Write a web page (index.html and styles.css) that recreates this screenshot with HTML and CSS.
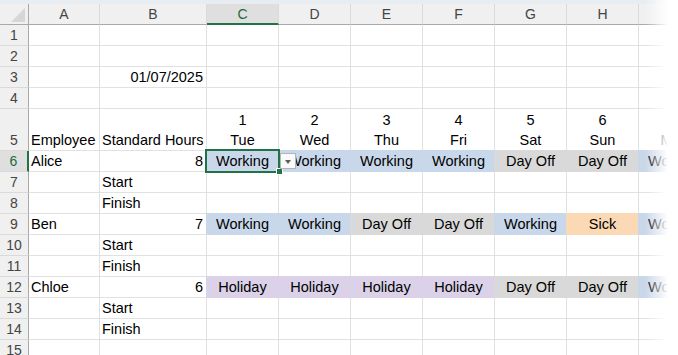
FILE: index.html
```html
<!DOCTYPE html>
<html lang="en">
<head>
  <meta charset="UTF-8">
  <title>Rota - Sheet1</title>
  <link rel="stylesheet" href="styles.css">
</head>
<body>
  <div class="topbar"></div>

  <div class="sheet">
    <div class="row head">
      <div class="hc corner">
        <svg width="28" height="20" viewBox="0 0 28 20"><polygon points="25,4 25,18 11,18" fill="#d6d6d6"/></svg>
      </div>
      <div class="hc">A</div>
      <div class="hc">B</div>
      <div class="hc sel">C</div>
      <div class="hc">D</div>
      <div class="hc">E</div>
      <div class="hc">F</div>
      <div class="hc">G</div>
      <div class="hc">H</div>
      <div class="hc">I</div>
    </div>

    <div class="row"><div class="rh">1</div><div class="c"></div><div class="c"></div><div class="c"></div><div class="c"></div><div class="c"></div><div class="c"></div><div class="c"></div><div class="c"></div><div class="c"></div></div>
    <div class="row"><div class="rh">2</div><div class="c"></div><div class="c"></div><div class="c"></div><div class="c"></div><div class="c"></div><div class="c"></div><div class="c"></div><div class="c"></div><div class="c"></div></div>
    <div class="row"><div class="rh">3</div><div class="c"></div><div class="c r">01/07/2025</div><div class="c"></div><div class="c"></div><div class="c"></div><div class="c"></div><div class="c"></div><div class="c"></div><div class="c"></div></div>
    <div class="row"><div class="rh">4</div><div class="c"></div><div class="c"></div><div class="c"></div><div class="c"></div><div class="c"></div><div class="c"></div><div class="c"></div><div class="c"></div><div class="c"></div></div>

    <div class="row tall">
      <div class="rh">5</div>
      <div class="c">Employee</div>
      <div class="c">Standard Hours</div>
      <div class="c m">1<br>Tue</div>
      <div class="c m">2<br>Wed</div>
      <div class="c m">3<br>Thu</div>
      <div class="c m">4<br>Fri</div>
      <div class="c m">5<br>Sat</div>
      <div class="c m">6<br>Sun</div>
      <div class="c m">7<br>Mon</div>
    </div>

    <div class="row">
      <div class="rh sel">6</div>
      <div class="c">Alice</div>
      <div class="c r">8</div>
      <div class="c m working active">Working
        <div class="selection"><div class="fill-handle"></div></div>
        <div class="dropdown"><span class="arrow"></span></div>
      </div>
      <div class="c m working">Working</div>
      <div class="c m working">Working</div>
      <div class="c m working">Working</div>
      <div class="c m dayoff">Day Off</div>
      <div class="c m dayoff">Day Off</div>
      <div class="c m working">Working</div>
    </div>
    <div class="row"><div class="rh">7</div><div class="c"></div><div class="c">Start</div><div class="c"></div><div class="c"></div><div class="c"></div><div class="c"></div><div class="c"></div><div class="c"></div><div class="c"></div></div>
    <div class="row"><div class="rh">8</div><div class="c"></div><div class="c">Finish</div><div class="c"></div><div class="c"></div><div class="c"></div><div class="c"></div><div class="c"></div><div class="c"></div><div class="c"></div></div>

    <div class="row">
      <div class="rh">9</div>
      <div class="c">Ben</div>
      <div class="c r">7</div>
      <div class="c m working">Working</div>
      <div class="c m working">Working</div>
      <div class="c m dayoff">Day Off</div>
      <div class="c m dayoff">Day Off</div>
      <div class="c m working">Working</div>
      <div class="c m sick">Sick</div>
      <div class="c m working">Working</div>
    </div>
    <div class="row"><div class="rh">10</div><div class="c"></div><div class="c">Start</div><div class="c"></div><div class="c"></div><div class="c"></div><div class="c"></div><div class="c"></div><div class="c"></div><div class="c"></div></div>
    <div class="row"><div class="rh">11</div><div class="c"></div><div class="c">Finish</div><div class="c"></div><div class="c"></div><div class="c"></div><div class="c"></div><div class="c"></div><div class="c"></div><div class="c"></div></div>

    <div class="row">
      <div class="rh">12</div>
      <div class="c">Chloe</div>
      <div class="c r">6</div>
      <div class="c m holiday">Holiday</div>
      <div class="c m holiday">Holiday</div>
      <div class="c m holiday">Holiday</div>
      <div class="c m holiday">Holiday</div>
      <div class="c m dayoff">Day Off</div>
      <div class="c m dayoff">Day Off</div>
      <div class="c m working">Working</div>
    </div>
    <div class="row"><div class="rh">13</div><div class="c"></div><div class="c">Start</div><div class="c"></div><div class="c"></div><div class="c"></div><div class="c"></div><div class="c"></div><div class="c"></div><div class="c"></div></div>
    <div class="row"><div class="rh">14</div><div class="c"></div><div class="c">Finish</div><div class="c"></div><div class="c"></div><div class="c"></div><div class="c"></div><div class="c"></div><div class="c"></div><div class="c"></div></div>
    <div class="row"><div class="rh">15</div><div class="c"></div><div class="c"></div><div class="c"></div><div class="c"></div><div class="c"></div><div class="c"></div><div class="c"></div><div class="c"></div><div class="c"></div></div>
  </div>

  <div class="fade"></div>
</body>
</html>
```

FILE: styles.css
```css
body {
  margin: 0;
  background: #fff;
  font-family: 'Liberation Sans', Arial, sans-serif;
  color: #000;
  overflow: hidden;
  height: 355px;
  position: relative;
}

.topbar {
  height: 4px;
  background: #e8edf1;
}

.sheet {
  width: 711px;
}

.row {
  display: grid;
  grid-template-columns: 29px 71px 107px repeat(6, 72px) 72px;
  height: 21px;
}

.row.tall {
  height: 42px;
}

/* column headers */
.hc {
  box-sizing: border-box;
  background: #f0f0f0;
  border-right: 1px solid #dadada;
  border-bottom: 1px solid #a9a9a9;
  color: #444;
  font-size: 14px;
  display: flex;
  align-items: center;
  justify-content: center;
}

.hc.corner {
  border-right: 1px solid #a9a9a9;
  align-items: flex-start;
}

.hc.sel {
  background: #dfdfdf;
  border-bottom: 2px solid #217346;
  color: #1d6b40;
}

/* row headers */
.rh {
  box-sizing: border-box;
  background: #f0f0f0;
  border-right: 1px solid #a9a9a9;
  border-bottom: 1px solid #dadada;
  color: #444;
  font-size: 14px;
  display: flex;
  align-items: center;
  justify-content: center;
}

.row.tall .rh {
  align-items: flex-end;
  line-height: 20px;
}

.rh.sel {
  background: #dfdfdf;
  border-right: 2px solid #217346;
  color: #1d6b40;
}

/* cells */
.c {
  box-sizing: border-box;
  background: #fff;
  border-right: 1px solid #e1e1e1;
  border-bottom: 1px solid #e1e1e1;
  font-size: 14.5px;
  line-height: 20px;
  padding: 0 2px;
  white-space: nowrap;
  display: flex;
  flex-direction: column;
  justify-content: flex-end;
}

.c.r {
  align-items: flex-end;
  padding-right: 3px;
}

.c.m {
  align-items: center;
  text-align: center;
}

.working {
  background: #c9d7ea;
  border-color: #c9d7ea;
  box-shadow: -1px -1px 0 0 #c9d7ea;
}

.dayoff {
  background: #d9d9d9;
  border-color: #d9d9d9;
  box-shadow: -1px -1px 0 0 #d9d9d9;
}

.sick {
  background: #fbd9b5;
  border-color: #fbd9b5;
  box-shadow: -1px -1px 0 0 #fbd9b5;
}

.holiday {
  background: #dbd2e9;
  border-color: #dbd2e9;
  box-shadow: -1px -1px 0 0 #dbd2e9;
}

/* active cell */
.active {
  position: relative;
}

.selection {
  position: absolute;
  left: -2px;
  top: -2px;
  width: 75px;
  height: 24px;
  box-sizing: border-box;
  border: 2px solid #217346;
}

.fill-handle {
  position: absolute;
  left: 69px;
  top: 17px;
  width: 7px;
  height: 7px;
  box-sizing: border-box;
  background: #217346;
  border: 1px solid #fff;
}

.dropdown {
  position: absolute;
  left: 73px;
  top: 2px;
  width: 16px;
  height: 16px;
  box-sizing: border-box;
  background: #fafafa;
  border: 1px solid #b3b3b3;
  display: flex;
  align-items: center;
  justify-content: center;
}

.arrow {
  width: 0;
  height: 0;
  border-left: 3px solid transparent;
  border-right: 3px solid transparent;
  border-top: 4px solid #5f5f5f;
  margin-top: 1px;
}

/* sheet edge fading out */
.fade {
  position: absolute;
  top: 0;
  left: 640px;
  width: 38px;
  height: 355px;
  background: linear-gradient(to right, rgba(255,255,255,0) 5px, #fff 28px);
}
```
